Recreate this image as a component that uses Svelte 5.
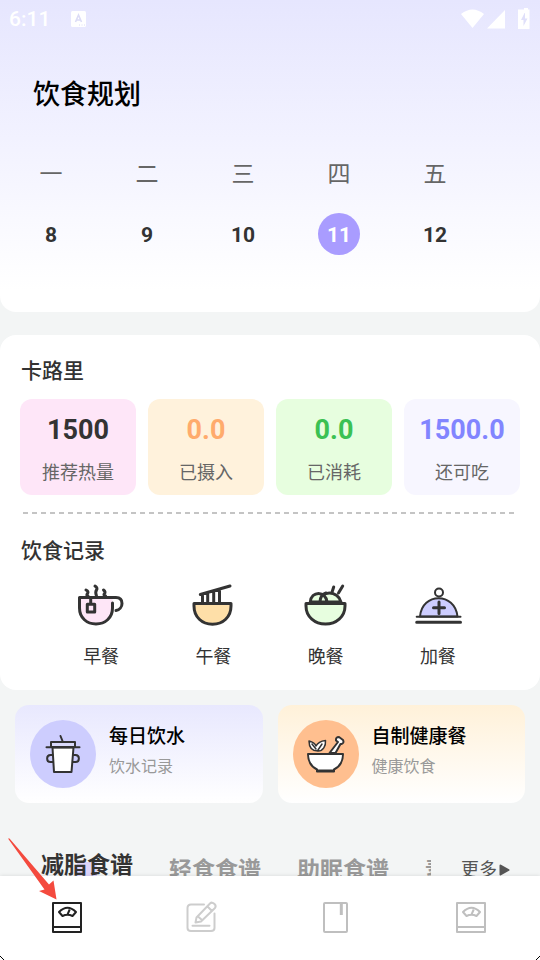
<script lang="ts">
  // 本周日期
  const days = [
    { week: '一', date: 8 },
    { week: '二', date: 9 },
    { week: '三', date: 10 },
    { week: '四', date: 11 },
    { week: '五', date: 12 }
  ];
  let selected = $state(11);

  // 卡路里统计
  const stats = [
    { value: '1500', label: '推荐热量', kind: 'pink' },
    { value: '0.0', label: '已摄入', kind: 'orange' },
    { value: '0.0', label: '已消耗', kind: 'green' },
    { value: '1500.0', label: '还可吃', kind: 'purple' }
  ];

  const meals = ['早餐', '午餐', '晚餐', '加餐'];

  const tabs = ['减脂食谱', '轻食食谱', '助眠食谱', '素食食谱'];
  let activeTab = $state(0);
</script>

{#snippet scaleIcon()}
  <svg viewBox="0 0 32 32" class="nav-icon">
    <path d="M2 2H30V31H2ZM2 26H30" />
    <path d="M8 11Q16.500 2.500 25 11L21.500 15Q16.500 12.500 11.500 15ZM18.700 8.500L16.300 14" />
  </svg>
{/snippet}

<div class="page">
  <main class="content">
    <header class="header">
      <div class="status">
        <span class="time">6:11</span>
        <svg class="app-badge" viewBox="0 0 16 16">
          <rect x="1" y="0" width="15" height="16" rx="1.500" fill="#fff" />
          <path d="M5.500 11L8.500 4L11.500 11M6.500 9H10.500" fill="none" stroke="#dcdcf6" stroke-width="1.600" />
          <path d="M9 14h1M11.500 14h1M14 14h1" stroke="#dcdcf6" />
        </svg>
        <svg class="signals" viewBox="0 0 70 22">
          <path d="M0 6Q11.500 -3 23 6L11.500 20Z" fill="#fff" />
          <path d="M26 20.500L44 2V20.500Z" fill="#fff" />
          <path d="M59 1.500h4V0h4v1.500h1.500V21H57V1.500Z" fill="#fff" />
          <path d="M63.500 5L60 12h2.500v6L66.500 10.500H64V5Z" fill="#e0e0fa" />
        </svg>
      </div>
      <h1>饮食规划</h1>
      <div class="week">
        {#each days as day}
          <button class="day" class:selected={day.date === selected} onclick={() => (selected = day.date)}>
            <span class="week-name">{day.week}</span>
            <span class="date">{day.date}</span>
          </button>
        {/each}
      </div>
    </header>

    <section class="card">
      <h2>卡路里</h2>
      <div class="stats">
        {#each stats as item}
          <div class="stat {item.kind}">
            <strong>{item.value}</strong>
            <span>{item.label}</span>
          </div>
        {/each}
      </div>
      <div class="divider"></div>
      <h2>饮食记录</h2>
      <div class="meals">
        {#each meals as meal, i}
          <button class="meal">
            <svg viewBox="0 0 48 48" class="meal-icon">
              {#if i === 0}
                <!-- 茶杯 -->
                <path d="M2.500 15.500H35.500V26C35.500 36 28 42 19 42S2.500 36 2.500 26Z" fill="#fee6f7" stroke="none" />
                <path d="M35.500 21V26C35.500 36 28 42 19 42S2.500 36 2.500 26V15.500H39C43 15.500 45 18 45 21.500S42.500 28 39 28.500" />
                <path d="M13.700 16V22M10.300 22.300H17.700V30H10.300Z" />
                <path d="M9 8Q12 9.500 10.500 11.500T11 14M18 4Q21 6 19.500 8T19.500 14M26.500 8Q29 10 27.500 11.500T28.500 14" />
              {:else if i === 1}
                <!-- 面条 -->
                <path d="M5 21.500H42V24C42 35 34 42.300 23.500 42.300S5 35 5 24Z" fill="#fedfa8" />
                <path d="M11.300 12.500L41 4M13.500 13V21M18.700 11.500V21M24.700 10V21M30.500 8.500V21" />
              {:else if i === 2}
                <!-- 沙拉碗 -->
                <path d="M18 20C18 8 36 8 39 20Z" fill="#e7fedf" />
                <path d="M8.300 20C9 8.500 24 8.500 25 20Z" fill="#e7fedf" />
                <path d="M18 20C18 15 21 12 24 11" />
                <path d="M4 21.500H43V24C43 35 34 42 23.500 42S4 35 4 24Z" fill="#e7fedf" />
                <path d="M31.700 5L30 10.300M40.700 4L36.500 11" />
              {:else}
                <!-- 餐盘罩 -->
                <circle cx="25" cy="10.500" r="4" fill="#fff" stroke-width="2" />
                <path d="M6 34.500C8 10 41 10 43.500 34.500Z" fill="#cdcdfe" stroke-width="2" />
                <path d="M2.700 34.700H46.500" stroke-width="2" />
                <path d="M2.700 40.300H46.500M25 20V31.500M19.500 25.700H30.500" />
              {/if}
            </svg>
            <span>{meal}</span>
          </button>
        {/each}
      </div>
    </section>

    <section class="entries">
      <a class="entry water" href="#water">
        <span class="round">
          <svg viewBox="0 0 40 40">
            <path d="M17.500 2L19.500 7" />
            <path d="M8 8H32V13H8Z" fill="#d9d9fa" />
            <path d="M9.500 13.500H30.500L28.500 38H11Z" fill="#fff" />
            <path d="M3.500 13.300H36.500M9.500 21H7.500C3 21 3 28 7.500 28H10M30.500 21H32.500C37 21 37 28 32.500 28H30" />
          </svg>
        </span>
        <span class="entry-text">
          <b>每日饮水</b>
          <small>饮水记录</small>
        </span>
      </a>
      <a class="entry meal-card" href="#healthy">
        <span class="round">
          <svg viewBox="0 0 40 40">
            <path d="M23.500 19L32 8L30 6.500Q29.500 3 33 3L37 6Q38.500 9 35.500 10L34.500 10L29.500 19Z" fill="#fff" />
            <path d="M12 17C5 17 3 13 3 7C7 8 9 9 10 12C12 8 15 7 19.500 6.500C20 12 17 17 12 17ZM12 16L16 10M6 10L10 15" fill="#fff" stroke-width="1.500" />
            <path d="M2 20H37C37 28 33 33 28 35.500V37.500H11V35.500C6 33 2 28 2 20Z" fill="#fff" />
            <path d="M11 36.500H28" />
          </svg>
        </span>
        <span class="entry-text">
          <b>自制健康餐</b>
          <small>健康饮食</small>
        </span>
      </a>
    </section>

    <section class="recipes">
      <div class="tabs">
        {#each tabs as tab, i}
          <button class="tab" class:active={i === activeTab} onclick={() => (activeTab = i)}>{tab}</button>
        {/each}
      </div>
      <a class="more" href="#more">
        更多
        <svg viewBox="0 0 11 12"><path d="M1.500 1.500L9.500 6L1.500 10.500Z" fill="#555" stroke="#555" stroke-width="2" stroke-linejoin="round" /></svg>
      </a>
    </section>
  </main>

  <nav class="nav">
    <button class="nav-item current" aria-label="饮食">{@render scaleIcon()}</button>
    <button class="nav-item" aria-label="记录">
      <svg viewBox="0 0 32 32" class="nav-icon light">
        <path d="M18 3.500H5Q1.500 3.500 1.500 7V27Q1.500 30 5 30H25Q28.500 30 28.500 27V12.500M6.500 24.700H23.500" />
        <path d="M9.500 21.500L10.500 16.500L24 2.500Q26 0.500 28.500 3Q30.500 5 29 7L15 20.500ZM21.500 5.500L26 10M12 15.500L16 19" />
      </svg>
    </button>
    <button class="nav-item" aria-label="食谱">
      <svg viewBox="0 0 32 32" class="nav-icon">
        <rect x="4" y="2" width="23" height="29" rx="1" />
        <path d="M21.300 2V14" stroke-width="3" />
      </svg>
    </button>
    <button class="nav-item" aria-label="我的">{@render scaleIcon()}</button>

    <!-- 红色引导箭头 -->
    <svg class="pointer" viewBox="0 0 49 62">
      <path d="M0 0.500L1.500 0.500L41 46.500L45.500 42.500L48.500 61.500L31 53L36.500 51.500Z" fill="#f44a3e" />
    </svg>
    <svg class="corner left" viewBox="0 0 4 4"><path d="M0 0L4 4" /></svg>
    <svg class="corner right" viewBox="0 0 4 4"><path d="M4 0L0 4" /></svg>
  </nav>
</div>

<style>
  :global(body) {
    margin: 0;
    background: #f3f5f5;
  }

  .page {
    display: flex;
    flex-direction: column;
    height: 100vh;
    font-family: Roboto, "Noto Sans CJK SC", sans-serif;
    color: #333;
  }

  button {
    padding: 0;
    border: none;
    background: none;
    font-family: inherit;
    color: inherit;
    cursor: pointer;
  }

  a {
    color: inherit;
    text-decoration: none;
  }

  .content {
    flex: 1;
    min-height: 0;
    overflow: hidden;
  }

  .header {
    padding-bottom: 57px;
    border-radius: 0 0 16px 16px;
    background: linear-gradient(#e6e6fe, #f3f3ff 48%, #fff 93%);
  }

  .status {
    display: flex;
    align-items: center;
    height: 37px;
    padding: 0 9px;
    color: #fff;
  }

  .time {
    font-size: 21px;
    font-weight: 500;
  }

  .app-badge {
    width: 16px;
    height: 16px;
    margin-left: 20px;
  }

  .signals {
    width: 70px;
    height: 22px;
    margin-left: auto;
  }

  h1 {
    margin: 38px 33px 0;
    font-size: 27px;
    line-height: 40px;
    font-weight: 500;
    color: #000;
  }

  .week {
    display: flex;
    margin-top: 44px;
    padding-left: 3px;
  }

  .day {
    display: flex;
    flex-direction: column;
    align-items: center;
    gap: 22px;
    width: 96px;
  }

  .week-name {
    font-size: 23px;
    line-height: 32px;
    color: #666;
  }

  .date {
    width: 42px;
    height: 42px;
    border-radius: 50%;
    font-size: 21px;
    line-height: 44px;
    font-weight: 700;
  }

  .selected .date {
    background: #a99cff;
    color: #fff;
  }

  .card {
    margin-top: 23px;
    padding: 20px 20px 19px;
    border-radius: 16px;
    background: #fff;
  }

  h2 {
    margin: 0 1px;
    font-size: 21px;
    line-height: 32px;
    font-weight: 500;
  }

  .stats {
    display: grid;
    grid-template-columns: repeat(4, 1fr);
    gap: 12px;
    margin-top: 12px;
  }

  .stat {
    display: flex;
    flex-direction: column;
    align-items: center;
    gap: 13px;
    padding: 15px 0 8px;
    border-radius: 12px;
  }

  .stat strong {
    font-size: 27px;
    line-height: 32px;
    font-weight: 700;
  }

  .stat span {
    font-size: 18px;
    line-height: 28px;
    color: #666;
  }

  .stat.pink {
    background: #fee6f8;
  }

  .stat.orange {
    background: #fff2dc;
  }

  .stat.orange strong {
    color: #ffab6c;
  }

  .stat.green {
    background: #e7fedf;
  }

  .stat.green strong {
    color: #3bc153;
  }

  .stat.purple {
    background: #f7f6ff;
  }

  .stat.purple strong {
    color: #8285ff;
  }

  .divider {
    height: 2px;
    margin: 17px 3px 21px;
    background: repeating-linear-gradient(90deg, #c4c4c4 0 5px, transparent 5px 9px);
  }

  .meals {
    display: grid;
    grid-template-columns: repeat(4, 1fr);
    margin: 15px 26px 0 25px;
  }

  .meal {
    display: flex;
    flex-direction: column;
    align-items: center;
    gap: 13px;
    font-size: 18px;
    line-height: 28px;
  }

  .meal-icon {
    width: 48px;
    height: 48px;
    fill: none;
    stroke: #333;
    stroke-width: 3;
    stroke-linecap: round;
    stroke-linejoin: round;
  }

  .entries {
    display: grid;
    grid-template-columns: 1fr 1fr;
    gap: 15px;
    padding: 15px;
  }

  .entry {
    display: flex;
    gap: 13px;
    padding: 15px;
    border-radius: 14px;
  }

  .water {
    background: linear-gradient(#e8e8fe, #fff);
  }

  .meal-card {
    background: linear-gradient(#fff1d9, #fff);
  }

  .round {
    display: flex;
    align-items: center;
    justify-content: center;
    width: 66px;
    height: 68px;
    border-radius: 50%;
    background: #cdcdfe;
  }

  .meal-card .round {
    background: #ffbf8f;
  }

  .round svg {
    width: 40px;
    height: 40px;
    fill: none;
    stroke: #333;
    stroke-width: 2;
    stroke-linecap: round;
    stroke-linejoin: round;
  }

  .entry-text {
    display: flex;
    flex-direction: column;
    gap: 4px;
    padding-top: 3px;
  }

  .entry b {
    font-size: 19px;
    line-height: 28px;
    font-weight: 500;
    color: #000;
  }

  .entry small {
    font-size: 16px;
    line-height: 24px;
    color: #999;
  }

  .recipes {
    display: flex;
    align-items: center;
    margin-top: 32px;
    padding: 0 30px 0 41px;
  }

  .tabs {
    display: flex;
    flex: 1;
    gap: 36px;
    min-width: 0;
    overflow: hidden;
  }

  .tab {
    flex: none;
    padding-top: 2px;
    font-size: 23px;
    line-height: 32px;
    font-weight: 700;
    color: #999;
  }

  .tab.active {
    padding: 0 0 8px;
    color: #333;
    background: linear-gradient(#dcd4fa, #dcd4fa) 36px 12px / 20px 20px no-repeat;
  }

  .more {
    display: flex;
    align-items: center;
    margin-left: 30px;
    gap: 2px;
    font-size: 18px;
    line-height: 32px;
    color: #555;
  }

  .more svg {
    width: 11px;
    height: 12px;
  }

  .nav {
    position: relative;
    display: grid;
    grid-template-columns: repeat(4, 1fr);
    box-sizing: border-box;
    height: 84px;
    padding: 0 2px 2px 0;
    background: #fff;
    box-shadow: 0 0 4px rgba(0, 0, 0, 0.12);
  }

  .nav-item {
    display: flex;
    align-items: center;
    justify-content: center;
    color: #bfbfbf;
  }

  .nav-item.current {
    color: #222;
  }

  .nav-icon {
    width: 32px;
    height: 32px;
    fill: none;
    stroke: currentColor;
    stroke-width: 2;
    stroke-linejoin: round;
  }

  .nav-icon.light {
    stroke: #cdcdcd;
    stroke-linecap: round;
  }

  .pointer {
    position: absolute;
    left: 8px;
    top: -38px;
    width: 49px;
    height: 62px;
    pointer-events: none;
  }

  .corner {
    position: absolute;
    bottom: 0;
    width: 4px;
    height: 4px;
    stroke: #000;
  }

  .corner.left {
    left: 0;
  }

  .corner.right {
    right: 0;
  }
</style>
